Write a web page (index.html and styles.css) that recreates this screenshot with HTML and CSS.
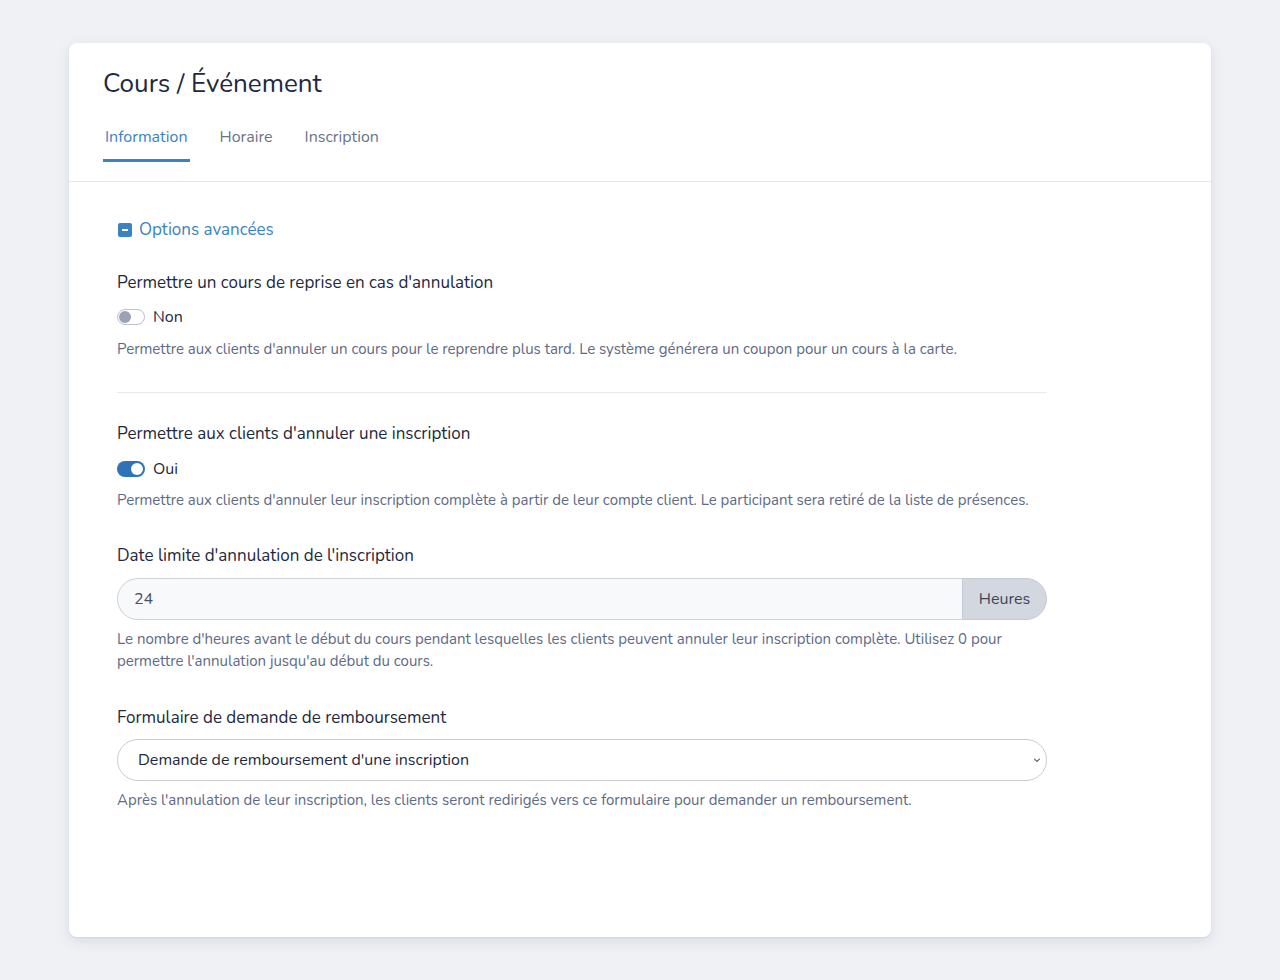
FILE: index.html
```html
<!DOCTYPE html>
<html lang="fr">
<head>
<meta charset="utf-8">
<title>Cours / Événement</title>
<link rel="stylesheet" href="styles.css">
</head>
<body>
<div class="card">
  <div class="card-header">
    <h1 class="title">Cours / Événement</h1>
    <nav class="tabs">
      <a class="tab active">Information</a>
      <a class="tab">Horaire</a>
      <a class="tab">Inscription</a>
    </nav>
  </div>
  <div class="card-body">
    <div class="adv">
      <span class="adv-icon"><span class="adv-dash"></span></span>
      <span class="adv-text">Options avancées</span>
    </div>

    <div class="field f1">
      <div class="label">Permettre un cours de reprise en cas d'annulation</div>
      <div class="switch-row">
        <span class="switch off"><span class="knob"></span></span>
        <span class="switch-label">Non</span>
      </div>
      <div class="help">Permettre aux clients d'annuler un cours pour le reprendre plus tard. Le système générera un coupon pour un cours à la carte.</div>
    </div>

    <hr class="divider">

    <div class="field f2">
      <div class="label">Permettre aux clients d'annuler une inscription</div>
      <div class="switch-row">
        <span class="switch on"><span class="knob"></span></span>
        <span class="switch-label">Oui</span>
      </div>
      <div class="help">Permettre aux clients d'annuler leur inscription complète à partir de leur compte client. Le participant sera retiré de la liste de présences.</div>
    </div>

    <div class="field f3">
      <div class="label">Date limite d'annulation de l'inscription</div>
      <div class="input-group">
        <div class="input">24</div>
        <div class="addon">Heures</div>
      </div>
      <div class="help">Le nombre d'heures avant le début du cours pendant lesquelles les clients peuvent annuler leur inscription complète. Utilisez 0 pour permettre l'annulation jusqu'au début du cours.</div>
    </div>

    <div class="field f4">
      <div class="label">Formulaire de demande de remboursement</div>
      <div class="select">
        <span>Demande de remboursement d'une inscription</span>
        <svg class="chev" width="10" height="10" viewBox="0 0 10 10"><path d="M2.5 4 L5 6.5 L7.5 4" fill="none" stroke="#6b7280" stroke-width="1.1" stroke-linecap="round" stroke-linejoin="round"/></svg>
      </div>
      <div class="help">Après l'annulation de leur inscription, les clients seront redirigés vers ce formulaire pour demander un remboursement.</div>
    </div>
  </div>
</div>
</body>
</html>
```

FILE: styles.css
```css
* { box-sizing: border-box; }
html, body { margin: 0; padding: 0; }
body {
  background: #eff1f5;
  font-family: "Nunito", "Lato", "Noto Sans", sans-serif;
  color: #1d2940;
  padding: 43px 69px;
  height: 980px;
}
.card {
  background: #fff;
  border-radius: 8px;
  box-shadow: 0 4px 14px rgba(30, 40, 70, 0.10), 0 1px 2px rgba(30, 40, 70, 0.06);
  height: 894px;
  width: 1142px;
}
.card-header {
  padding: 25px 34px 19px 34px;
  border-bottom: 1px solid #e5e8ee;
}
.title {
  margin: 0;
  font-size: 26px;
  font-weight: 400;
  color: #1d2940;
  line-height: 32px;
}
.tabs {
  display: flex;
  margin-top: 26px;
}
.tab {
  font-size: 16px;
  color: #6b7385;
  padding: 0 2px 11px 2px;
  margin-right: 28px;
  line-height: 22px;
  border-bottom: 3px solid transparent;
}
.tab.active {
  color: #3b82c4;
  border-bottom-color: #3b82c4;
}
.card-body {
  padding: 36px 48px 0 48px;
  width: 1026px;
}
.adv {
  display: flex;
  align-items: center;
  gap: 7px;
  height: 22px;
}
.adv-icon {
  width: 14px;
  height: 14px;
  background: #3b82c4;
  border-radius: 2px;
  display: flex;
  align-items: center;
  justify-content: center;
  margin-left: 1px;
  margin-top: 2px;
}
.adv-dash {
  width: 6px;
  height: 1.5px;
  background: #fff;
}
.adv-text {
  font-size: 17px;
  color: #3b82c4;
}
.field.f1 { margin-top: 30px; }
.label {
  font-size: 17px;
  line-height: 24px;
  padding-top: 1px;
  color: #1d2940;
}
.switch-row {
  display: flex;
  align-items: center;
  gap: 8px;
  margin-top: 12px;
  height: 20px;
}
.f2 .switch-row { margin-top: 13px; }
.switch {
  width: 28px;
  height: 16px;
  border-radius: 8px;
  position: relative;
  display: inline-block;
  flex: none;
}
.switch.off { border: 1px solid #b9c0cc; background: #fff; }
.switch.on { background: #2f72b8; }
.knob {
  position: absolute;
  top: 2px;
  width: 12px;
  height: 12px;
  border-radius: 50%;
}
.switch.off .knob { left: 1px; top: 1px; background: #9aa2b4; }
.switch.on .knob { left: 14px; background: #fff; }
.switch-label {
  font-size: 16px;
  color: #1d2940;
  line-height: 20px;
}
.help {
  font-size: 15px;
  color: #5d6a86;
  line-height: 22px;
  margin-top: 11px;
}
.f2 .help { margin-top: 10px; }
.divider {
  border: 0;
  border-top: 1px solid #e6e9ee;
  margin: 32px 0 0 0;
}
.field.f2 { margin-top: 28px; }
.field.f3 { margin-top: 32px; }
.input-group {
  display: flex;
  margin-top: 10px;
  height: 42px;
}
.input {
  flex: 1;
  background: #f8f9fb;
  border: 1px solid #cdd2da;
  border-right: 0;
  border-radius: 21px 0 0 21px;
  font-size: 16px;
  color: #4a5263;
  padding: 0 16px;
  display: flex;
  align-items: center;
}
.addon {
  width: 85px;
  background: #d3d7e0;
  border: 1px solid #c5cad4;
  border-radius: 0 21px 21px 0;
  font-size: 16px;
  color: #3c4557;
  display: flex;
  align-items: center;
  justify-content: center;
}
.f3 .help { margin-top: 8px; }
.field.f4 { margin-top: 33px; }
.select {
  margin-top: 9px;
  height: 42px;
  border: 1px solid #c7ccd5;
  border-radius: 21px;
  display: flex;
  align-items: center;
  justify-content: space-between;
  padding: 0 4px 0 20px;
  font-size: 16px;
  color: #1d2940;
}
.chev { display: block; }
.f4 .help { margin-top: 8px; }
```
